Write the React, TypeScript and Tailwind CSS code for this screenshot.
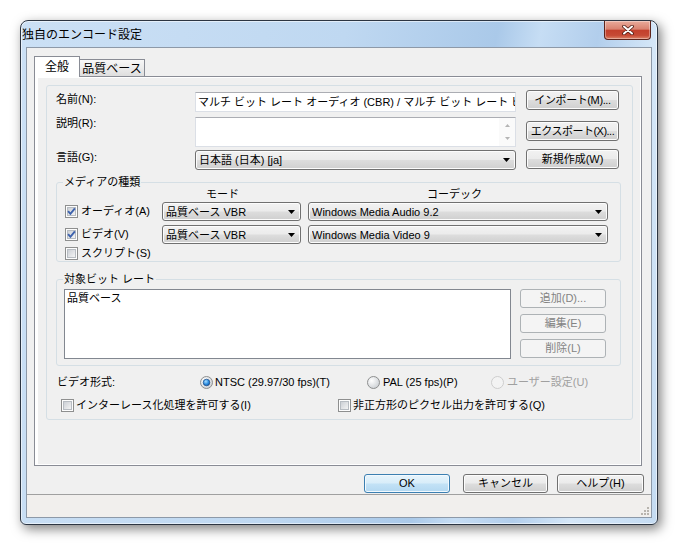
import React from "react";

const FONT = "font-['Liberation_Sans','Noto_Sans_CJK_JP',sans-serif]";

// Vista button / dropdown face
const face =
  "bg-[linear-gradient(to_bottom,#f2f2f2_0%,#ebebeb_48%,#dddddd_52%,#cfcfcf_100%)] shadow-[inset_0_0_0_1px_#fcfcfc]";

type BtnProps = {
  children: React.ReactNode;
  className?: string;
  disabled?: boolean;
  primary?: boolean;
};

function Btn({ children, className = "", disabled, primary }: BtnProps) {
  let look = `border-[#707070] ${face}`;
  if (disabled) look = "border-[#adb2b5] bg-[#f4f4f4] text-[#838383]";
  if (primary)
    look =
      "border-[#3c7fb1] bg-[linear-gradient(to_bottom,#e7f4fc_0%,#d8edf9_48%,#c3e2f6_52%,#b3d8f1_100%)] shadow-[inset_0_0_0_1px_#f2f9fe]";
  return (
    <div
      className={`flex shrink-0 items-center justify-center overflow-hidden whitespace-nowrap rounded-[3px] border leading-[13px] ${look} ${className}`}
    >
      {children}
    </div>
  );
}

function Combo({ value, className = "" }: { value: string; className?: string }) {
  return (
    <div
      className={`flex shrink-0 items-center rounded-[3px] border border-[#707070] pl-[3px] pr-[5px] ${face} ${className}`}
    >
      <span className="flex-1 overflow-hidden whitespace-nowrap leading-[14px]">{value}</span>
      <svg width="7" height="4" viewBox="0 0 7 4" className="shrink-0">
        <path d="M0 0H7L3.5 4Z" fill="#000" />
      </svg>
    </div>
  );
}

function Check({ checked = false }: { checked?: boolean }) {
  return (
    <svg width="13" height="13" viewBox="0 0 13 13" className="shrink-0">
      <defs>
        <linearGradient id="cbx" x1="0" y1="0" x2="1" y2="1">
          <stop offset="0" stopColor="#c9cdd3" />
          <stop offset="1" stopColor="#f6f6f6" />
        </linearGradient>
      </defs>
      <rect x="0.5" y="0.5" width="12" height="12" fill="#fdfdfd" stroke="#8e8f8f" />
      <rect x="2.5" y="2.5" width="8" height="8" fill="url(#cbx)" stroke="#b7bcc2" />
      {checked && (
        <path d="M3.1 6.2 5.4 8.8 9.9 3.3" fill="none" stroke="#3d62ad" strokeWidth="1.9" />
      )}
    </svg>
  );
}

function Radio({ checked = false, disabled = false }: { checked?: boolean; disabled?: boolean }) {
  return (
    <svg width="13" height="13" viewBox="0 0 13 13" className="shrink-0">
      <defs>
        <radialGradient id="rbg" cx="0.35" cy="0.35" r="0.8">
          <stop offset="0" stopColor="#ffffff" />
          <stop offset="1" stopColor="#c6cacf" />
        </radialGradient>
        <radialGradient id="rdot" cx="0.4" cy="0.35" r="0.75">
          <stop offset="0" stopColor="#a6ddff" />
          <stop offset="0.55" stopColor="#2b8ce0" />
          <stop offset="1" stopColor="#0f4e96" />
        </radialGradient>
      </defs>
      <circle
        cx="6.5"
        cy="6.5"
        r="6"
        fill={disabled ? "#f3f3f3" : "url(#rbg)"}
        stroke={disabled ? "#cdcdcd" : "#8e8f8f"}
      />
      {checked && <circle cx="6.5" cy="6.5" r="3.3" fill="url(#rdot)" stroke="#1b4a86" strokeWidth="0.7" />}
    </svg>
  );
}

export default function App() {
  return (
    <div className={`h-[547px] w-[680px] overflow-hidden bg-white pl-[20px] pt-[20px] text-[11px] text-black ${FONT}`}>
      {/* Window */}
      <div className="flex h-[505px] w-[638px] flex-col rounded-t-[8px] rounded-b-[6px] border border-[#2c3542] bg-[linear-gradient(100deg,#cbe0f5_0%,#bfd8f1_45%,#aac9e9_66%,#c6ddf4_72%,#b2ceec_80%,#d5e7f8_88%,#c4dbf2_100%)] shadow-[inset_0_0_0_1px_rgba(255,255,255,0.55),3px_4px_12px_rgba(0,0,0,0.5)]">
        {/* Title bar */}
        <div className="flex h-[26px] items-start">
          <span className="ml-[1px] mt-[7px] text-[12px] leading-[15px]">独自のエンコード設定</span>
          <div className="ml-auto mr-[6px] flex h-[19px] w-[47px] items-center justify-center rounded-b-[4px] border border-t-0 border-[#5e241b] bg-[linear-gradient(to_bottom,#e9ab9b_0%,#d98270_45%,#c3402c_52%,#c64a35_80%,#dd8468_100%)] shadow-[inset_0_0_0_1px_rgba(255,255,255,0.35)]">
            <svg width="12" height="10" viewBox="0 0 12 10">
              <path d="M2 1.5 10 8.5M10 1.5 2 8.5" stroke="#4b1810" strokeWidth="3.6" strokeLinecap="round" />
              <path d="M2 1.5 10 8.5M10 1.5 2 8.5" stroke="#ffffff" strokeWidth="2" strokeLinecap="round" />
            </svg>
          </div>
        </div>

        {/* Client area */}
        <div className="mx-[5px] mb-[6px] flex h-[471px] flex-col border border-[#8d99a8] bg-[#f0f0f0]">
          {/* Tabs */}
          <div className="ml-[7px] mt-[8px] flex h-[20px] items-end">
            <div className="relative z-10 -mb-[1px] flex h-[21px] w-[46px] items-center justify-center border border-b-0 border-[#898c95] bg-white text-[12px]">
              全般
            </div>
            <div className="flex h-[17px] w-[65px] items-center justify-center border border-b-0 border-l-0 border-[#898c95] bg-[linear-gradient(to_bottom,#f7f7f7_0%,#ececec_50%,#dedede_100%)] pt-[1px] text-[12px]">
              品質ベース
            </div>
          </div>

          {/* Tab panel */}
          <div className="ml-[7px] mr-[9px] h-[390px] border border-[#898c95] bg-white pb-[1px] pl-[3px] pr-[1px] pt-[1px]">
            <div className="h-full bg-[#f0f0f0] pl-[8px] pt-[7px]">
              {/* Big group */}
              <div className="h-[335px] w-[587px] rounded-[3px] border border-[#d5dfe5]">
                {/* Name / description / language */}
                <div className="flex pl-[9px]">
                  <div className="mt-[6px] flex w-[460px] flex-col">
                    <div className="flex h-[20px] items-start">
                      <span className="w-[139px] leading-[14px]">名前(N):</span>
                      <div className="h-[20px] w-[321px] overflow-hidden whitespace-nowrap border border-[#dbdfe6] border-t-[#abadb3] bg-white pl-[2px] leading-[18px]">
                        マルチ ビット レート オーディオ (CBR) / マルチ ビット レート ビデオ (CBR)
                      </div>
                    </div>
                    <div className="mt-[5px] flex h-[30px] items-start">
                      <span className="-mt-[1px] w-[139px] leading-[14px]">説明(R):</span>
                      <div className="flex h-[30px] w-[321px] justify-end border border-[#dbdfe6] border-t-[#abadb3] bg-white">
                        <div className="flex w-[16px] flex-col items-center justify-between bg-[#fafafa] py-[6px]">
                          <svg width="5" height="3" viewBox="0 0 5 3">
                            <path d="M0 3H5L2.5 0Z" fill="#b4b4b4" />
                          </svg>
                          <svg width="5" height="3" viewBox="0 0 5 3">
                            <path d="M0 0H5L2.5 3Z" fill="#b4b4b4" />
                          </svg>
                        </div>
                      </div>
                    </div>
                    <div className="mt-[3px] flex h-[20px] items-start">
                      <span className="w-[139px] leading-[14px]">言語(G):</span>
                      <Combo value="日本語 (日本) [ja]" className="h-[20px] w-[321px]" />
                    </div>
                  </div>
                  <div className="ml-[10px] mt-[4px] flex flex-col">
                    <Btn className="h-[20px] w-[93px] tracking-[-0.4px]">インポート(M)...</Btn>
                    <Btn className="mt-[11px] h-[20px] w-[93px] tracking-[-0.5px]">エクスポート(X)...</Btn>
                    <Btn className="mt-[8px] h-[20px] w-[93px]">新規作成(W)</Btn>
                  </div>
                </div>

                {/* Media types */}
                <fieldset className="ml-[9px] mt-[6px] w-[565px] rounded-[3px] border border-[#d5dfe5] pl-[6px]">
                  <legend className="px-[1px] leading-[12px]">メディアの種類</legend>
                  <div className="flex flex-col">
                    <div className="flex h-[12px] leading-[12px]">
                      <span className="ml-[143px] w-[221px]">モード</span>
                      <span>コーデック</span>
                    </div>
                    <div className="ml-[2px] mt-[2px] flex h-[19px] items-center">
                      <div className="flex w-[97px] items-center gap-[3px]">
                        <Check checked />
                        <span>オーディオ(A)</span>
                      </div>
                      <Combo value="品質ベース VBR" className="h-[19px] w-[139px]" />
                      <Combo value="Windows Media Audio 9.2" className="ml-[7px] h-[19px] w-[300px]" />
                    </div>
                    <div className="ml-[2px] mt-[4px] flex h-[19px] items-center">
                      <div className="flex w-[97px] items-center gap-[3px]">
                        <Check checked />
                        <span>ビデオ(V)</span>
                      </div>
                      <Combo value="品質ベース VBR" className="h-[19px] w-[139px]" />
                      <Combo value="Windows Media Video 9" className="ml-[7px] h-[19px] w-[300px]" />
                    </div>
                    <div className="ml-[2px] mt-[1px] flex h-[16px] items-center gap-[3px]">
                      <Check />
                      <span>スクリプト(S)</span>
                    </div>
                  </div>
                </fieldset>

                {/* Target bit rate */}
                <fieldset className="ml-[9px] mt-[11px] w-[565px] rounded-[3px] border border-[#d5dfe5] pl-[6px]">
                  <legend className="px-[1px] leading-[12px]">対象ビット レート</legend>
                  <div className="ml-[1px] mt-[4px] flex pb-[6px]">
                    <div className="h-[70px] w-[447px] border border-[#828790] bg-white pl-[2px] pt-[1px] leading-[14px]">
                      品質ベース
                    </div>
                    <div className="ml-[9px] flex flex-col">
                      <Btn disabled className="h-[19px] w-[86px]">追加(D)...</Btn>
                      <Btn disabled className="mt-[6px] h-[19px] w-[86px]">編集(E)</Btn>
                      <Btn disabled className="mt-[6px] h-[19px] w-[86px]">削除(L)</Btn>
                    </div>
                  </div>
                </fieldset>

                {/* Video format */}
                <div className="ml-[10px] mt-[9px] flex h-[14px] items-center">
                  <span className="w-[143px]">ビデオ形式:</span>
                  <div className="flex w-[167px] items-center gap-[2px]">
                    <Radio checked />
                    <span>NTSC (29.97/30 fps)(T)</span>
                  </div>
                  <div className="flex w-[124px] items-center gap-[3px]">
                    <Radio />
                    <span>PAL (25 fps)(P)</span>
                  </div>
                  <div className="flex items-center gap-[3px] text-[#a0a0a0]">
                    <Radio disabled />
                    <span>ユーザー設定(U)</span>
                  </div>
                </div>

                {/* Options */}
                <div className="ml-[14px] mt-[9px] flex h-[14px] items-center">
                  <div className="flex w-[277px] items-center gap-[2px]">
                    <Check />
                    <span>インターレース化処理を許可する(I)</span>
                  </div>
                  <div className="flex items-center gap-[2px]">
                    <Check />
                    <span>非正方形のピクセル出力を許可する(Q)</span>
                  </div>
                </div>
              </div>
            </div>
          </div>

          {/* Dialog buttons */}
          <div className="mr-[7px] mt-[8px] flex h-[19px] justify-end">
            <Btn primary className="h-[19px] w-[86px]">OK</Btn>
            <Btn className="ml-[13px] h-[19px] w-[85px]">キャンセル</Btn>
            <Btn className="ml-[9px] h-[19px] w-[87px]">ヘルプ(H)</Btn>
          </div>

          {/* Status bar */}
          <div className="mt-[1px] flex flex-1 items-end justify-end border-t border-[#a0a0a0] bg-[#f1efed] pb-[2px] pr-[2px]">
            <svg width="9" height="9" viewBox="0 0 9 9">
              <g fill="#b8b4ae">
                <rect x="7" y="1" width="2" height="2" />
                <rect x="4" y="4" width="2" height="2" />
                <rect x="7" y="4" width="2" height="2" />
                <rect x="1" y="7" width="2" height="2" />
                <rect x="4" y="7" width="2" height="2" />
                <rect x="7" y="7" width="2" height="2" />
              </g>
            </svg>
          </div>
        </div>
      </div>
    </div>
  );
}
